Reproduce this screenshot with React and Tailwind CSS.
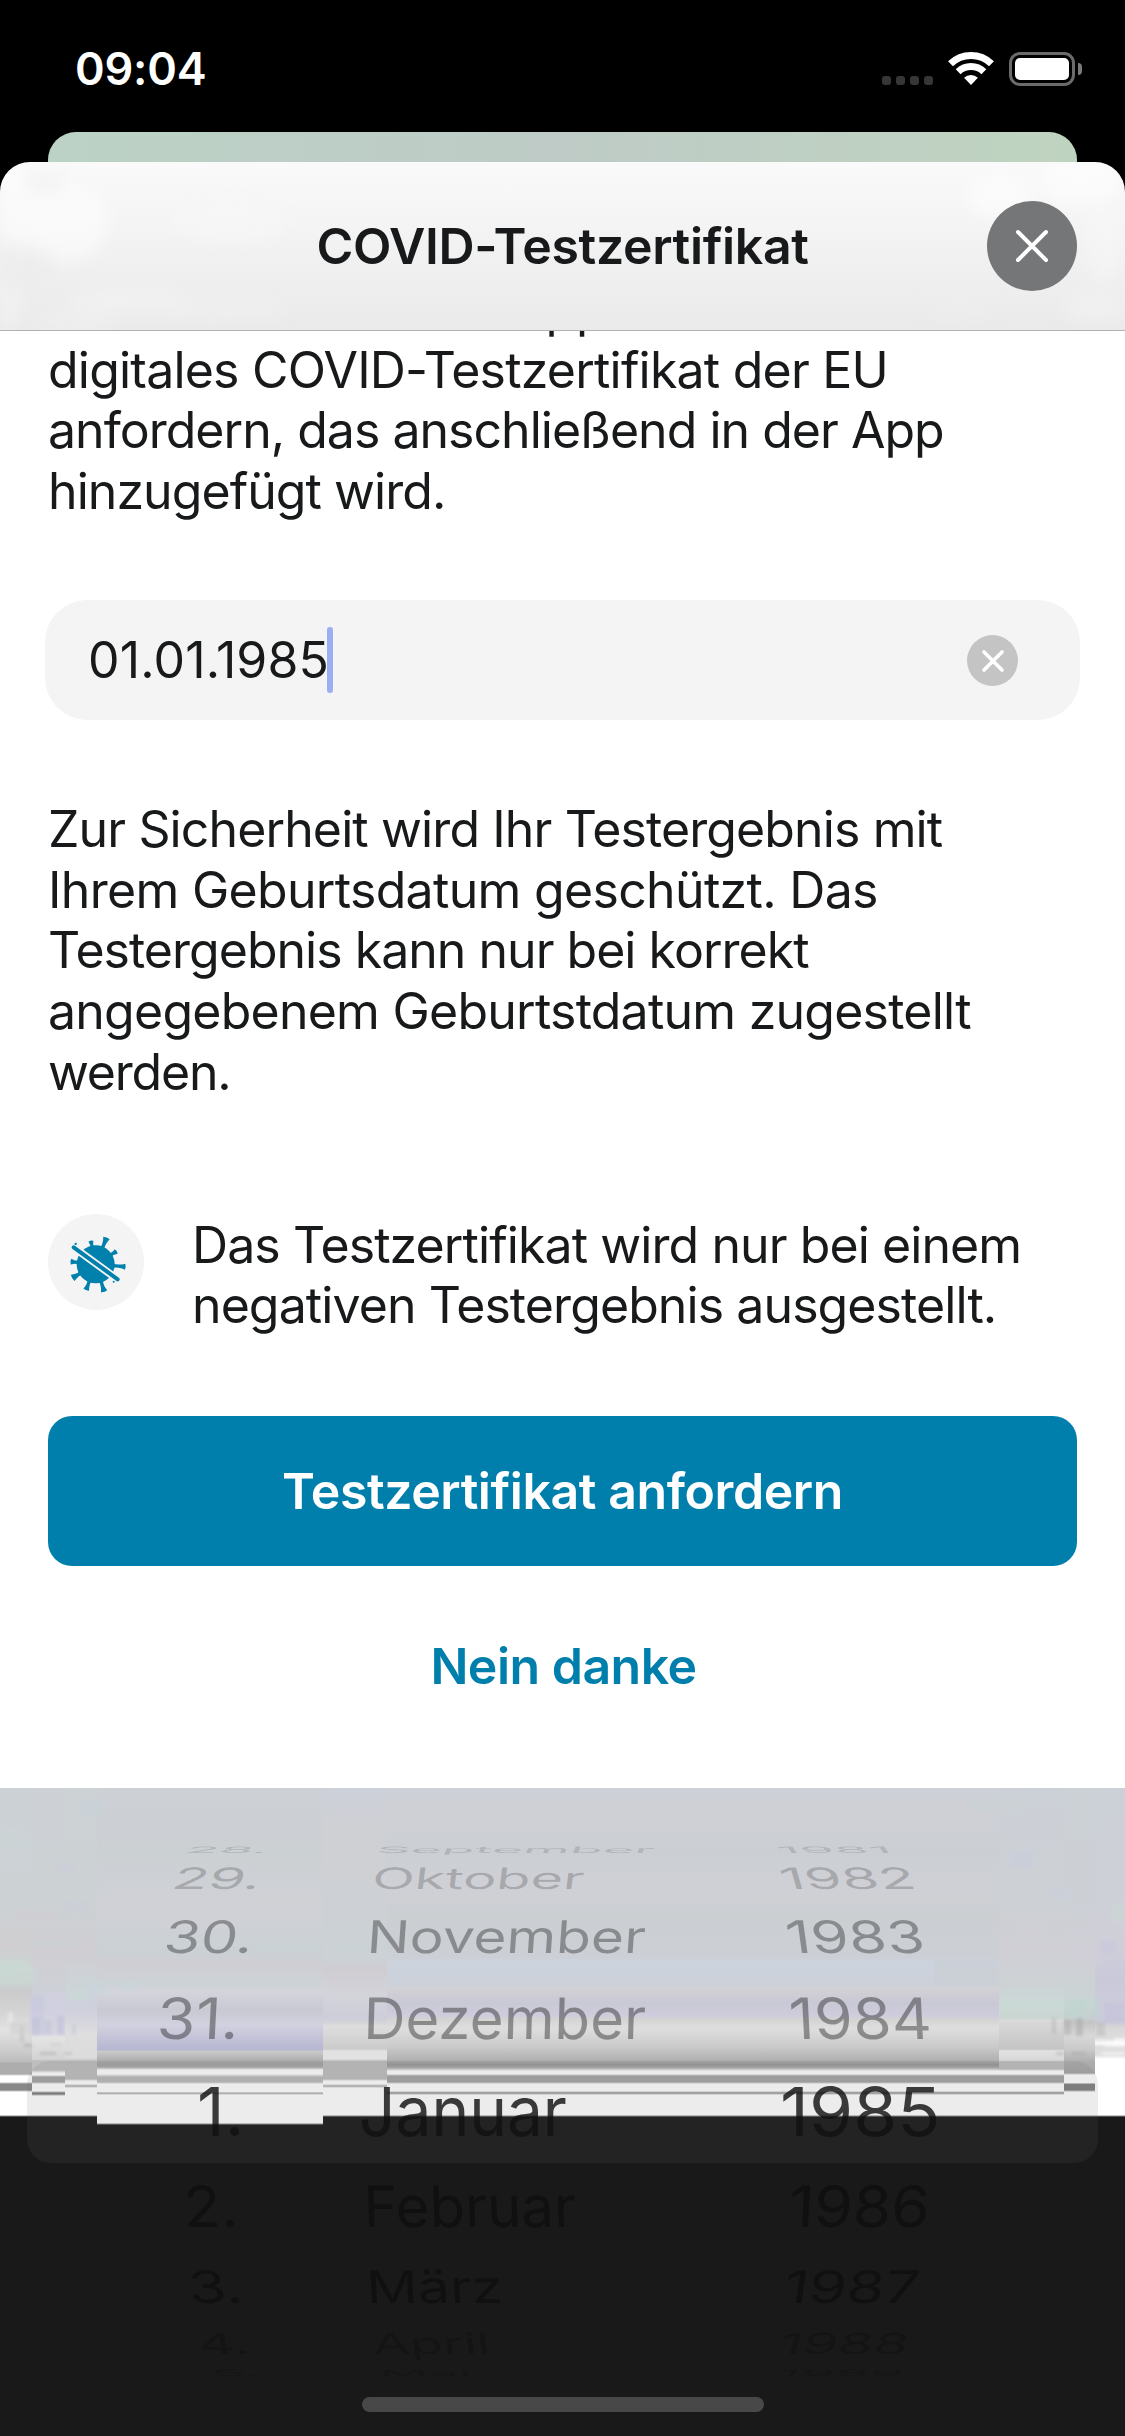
const INTRO = [
  ['digitales COVID-Testzertifikat der EU', 'tracking-[-0.79px]'],
  ['anfordern, das anschließend in der App', 'tracking-[-0.98px]'],
  ['hinzugefügt wird.', 'tracking-[-0.94px]'],
];

const SECURITY = [
  ['Zur Sicherheit wird Ihr Testergebnis mit', 'tracking-[-0.88px]'],
  ['Ihrem Geburtsdatum geschützt. Das', 'tracking-[-0.68px]'],
  ['Testergebnis kann nur bei korrekt', 'tracking-[-0.98px]'],
  ['angegebenem Geburtstdatum zugestellt', 'tracking-[-0.76px]'],
  ['werden.', 'tracking-[-1.2px]'],
];

const NOTICE = [
  ['Das Testzertifikat wird nur bei einem', 'tracking-[-0.91px]'],
  ['negativen Testergebnis ausgestellt.', 'tracking-[-0.91px]'],
];

// Each wheel row: height down to its baseline, vertical scale, tint and
// its day / month / year cells as [text, left, horizontal scale, skew].
const WHEEL = [
  { h: 65, sy: 0.13, tint: 'text-black/15', cells: [['28.', 183, 0.82, -40], ['September', 375, 0.79, -20], ['1981', 779, 0.82, 35]] },
  { h: 36, sy: 0.435, tint: 'text-black/20', cells: [['29.', 170, 0.87, -17], ['Oktober', 371, 0.82, -7], ['1982', 783, 0.88, 16]] },
  { h: 64, sy: 0.66, tint: 'text-black/33', cells: [['30.', 162, 0.87, -9], ['November', 366, 0.835, -4], ['1983', 788, 0.9, 8]] },
  { h: 85.5, sy: 0.84, tint: 'text-black/36', cells: [['31.', 156, 0.92, -3], ['Dezember', 363, 0.855, -1.5], ['1984', 790, 0.915, 3]] },
  { h: 97.5, sy: 1, tint: 'text-[#111]/82', cells: [['1.', 197, 1, 0], ['Januar', 359, 0.94, 0], ['1985', 780, 1.048, 0]] },
  { h: 90.5, sy: 0.84, tint: 'text-black/36', cells: [['2.', 184, 0.9, 2], ['Februar', 364, 0.855, 1.5], ['1986', 788, 0.915, -3]] },
  { h: 76, sy: 0.66, tint: 'text-black/33', cells: [['3.', 190, 0.9, 6], ['März', 367, 0.84, 3], ['1987', 782, 0.9, -8]] },
  { h: 51.5, sy: 0.43, tint: 'text-black/20', cells: [['4.', 199, 0.85, 10], ['April', 374, 0.79, 7], ['1988', 777, 0.84, -16]] },
  { h: 21.5, sy: 0.13, tint: 'text-black/15', cells: [['5.', 212, 0.85, 30], ['Mai', 380, 0.8, 20], ['1989', 776, 0.82, -30]] },
];

const W = '#ffffff';
const D = '#191919';

// Vertical strips of the keyboard backdrop: x, width, then [y, colour] steps.
const STRIPS = [
  [0, 32, [[1788, '#ccd1d6'], [1900, '#ccd2d4'], [1945, '#d0ced1'], [1970, '#cbd5d2'], [1992, '#cbcbcd'], [2015, '#d6d6d6'], [2030, '#e2e2e2'], [2050, '#cdcdcd'], [2062, '#bcbcbc'], [2063, '#adadad'], [2074, '#adadad'], [2076, W], [2082, W], [2084, '#888'], [2090, '#888'], [2092, W], [2115, W], [2117, D]]],
  [32, 33, [[1788, '#cdd1d6'], [1900, '#ccd1d3'], [1950, '#d0ced2'], [1985, '#cdd0d6'], [2010, '#cfcfe0'], [2034, '#d8d8e0'], [2037, '#e4e4e4'], [2059, '#d4d4d4'], [2061, '#bebebe'], [2070, '#bebebe'], [2073, W], [2075, W], [2077, '#a5a5a5'], [2082, '#a5a5a5'], [2084, W], [2091, W], [2093, '#7c7c7c'], [2094, '#7c7c7c'], [2096, W], [2115, W], [2117, D]]],
  [65, 32, [[1788, '#cdd2d5'], [1900, '#ccd1d3'], [1950, '#d0ced2'], [1985, '#ccd4d8'], [2010, '#cfd0dc'], [2034, '#dedede'], [2058, '#dcdcdc'], [2061, '#bebebe'], [2079, '#bebebe'], [2081, W], [2084, W], [2086, '#aaa'], [2088, W], [2115, W], [2117, D]]],
  [97, 226, [[1788, '#cdd0d5'], [1830, '#cccfd3'], [1850, '#cbd0d3'], [1915, '#d0d1d6'], [1950, '#cad1d4'], [1965, '#cfced3'], [1985, '#ccd3d6'], [1992, '#d4d4dc'], [2010, '#c9c9d4'], [2025, '#d2d1df'], [2050, '#b6b6d2'], [2051, '#cbcbcb'], [2064, '#a3a3a3'], [2067, '#a8a8a8'], [2070, W], [2074, W], [2077, '#bababa'], [2082, '#bababa'], [2084, W], [2092, W], [2093, '#a0a0a0'], [2095, W], [2123, W], [2125, D]]],
  [323, 64, [[1788, '#ccd0d9'], [1830, '#cfd0d4'], [1900, '#cdd0d4'], [1955, '#cbd2d6'], [1970, '#cfcdd2'], [1995, '#d3d3da'], [2018, '#cecedb'], [2022, '#d3d3d8'], [2026, '#dedede'], [2049, '#cbcbcb'], [2051, '#e2e2e2'], [2059, '#e2e2e2'], [2061, '#bebebe'], [2079, '#bebebe'], [2081, W], [2084, W], [2086, '#aaa'], [2088, W], [2115, W], [2117, D]]],
  [387, 612, [[1788, '#ccd0d8'], [1810, '#cfd0d5'], [1850, '#cbcfd4'], [1890, '#cfd0d5'], [1915, '#cbcfd2'], [1957, '#cccfd5'], [1961, '#ccd3dd'], [1985, '#ccd1d9'], [1988, '#d2d2d5'], [2003, '#c9c8d5'], [2016, '#cfcddd'], [2019, '#d3d3d3'], [2028, '#dedede'], [2047, '#cacaca'], [2060, '#b1b1b1'], [2065, '#979797'], [2068, '#b0b0b0'], [2071, W], [2074, W], [2076, '#a5a5a5'], [2082, '#a5a5a5'], [2084, W], [2091, W], [2093, '#8c8c8c'], [2095, W], [2115, W], [2117, D]]],
  [999, 65, [[1788, '#ccd0d7'], [1900, '#cdd0d4'], [1950, '#cfcfd5'], [1985, '#cdd2d5'], [2005, '#cadad6'], [2018, '#cbd5d2'], [2020, '#dadada'], [2049, '#c4c4c4'], [2051, '#e2e2e2'], [2060, '#d8d8d8'], [2062, '#bebebe'], [2069, '#bebebe'], [2071, W], [2074, W], [2076, '#a5a5a5'], [2082, '#a5a5a5'], [2084, W], [2091, W], [2093, '#8c8c8c'], [2095, W], [2115, W], [2117, D]]],
  [1064, 31, [[1788, '#ccd1d6'], [1900, '#ccd0d5'], [1950, '#d0cfd7'], [1990, '#ccd3d4'], [2005, '#c6d5d2'], [2018, '#c8cfd0'], [2022, '#c4c4c4'], [2036, '#d8d8d8'], [2050, '#c9c9c9'], [2062, '#adadad'], [2073, '#a5a5a5'], [2075, W], [2083, W], [2084, '#808080'], [2090, '#808080'], [2092, W], [2115, W], [2117, D]]],
  [1095, 30, [[1788, '#ccd0d7'], [1900, '#cdd0d6'], [1940, '#d0cfd8'], [1980, '#cac9da'], [2005, '#cdccdc'], [2022, '#cac9da'], [2028, '#d8d8d8'], [2038, '#dcdcdc'], [2043, '#fafafa'], [2047, '#dddddd'], [2055, '#dedede'], [2059, W], [2115, W], [2117, D]]],
];

// Faint colour speckles along both edges: x, y, width, height, colour.
const SPECKS = [
  [0, 1960, 26, 26, '#c8dcd4'], [14, 1968, 22, 16, '#cbdad5'], [30, 1995, 14, 40, '#c9c8e0'], [46, 1992, 18, 20, '#d2d1e2'],
  [32, 2018, 8, 17, '#bcbcd8'], [44, 2020, 8, 15, '#c2c2dc'], [57, 2016, 7, 19, '#bebeda'], [72, 2024, 4, 11, '#c6c6de'],
  [66, 1990, 22, 10, '#cbdad5'], [92, 1986, 14, 8, '#c8d6de'], [122, 1984, 14, 9, '#c9d6dd'], [8, 2012, 5, 12, '#f0f0f0'],
  [10, 2022, 20, 12, '#cfcfcf'], [20, 2026, 4, 16, '#bdbdbd'], [24, 2044, 8, 3, '#a5a5a5'], [40, 2052, 16, 3, '#ababab'],
  [65, 2052, 7, 3, '#b2b2b2'], [50, 2043, 12, 4, '#d0d0d0'], [56, 1862, 20, 12, '#cccfd9'], [66, 1902, 20, 10, '#cbcedb'],
  [14, 1912, 40, 10, '#d2cfd4'], [30, 1940, 46, 6, '#ccd3d6'], [0, 1830, 24, 20, '#cdd6d6'], [80, 1800, 24, 14, '#c9d2da'],
  [1068, 2000, 18, 18, '#bfd6d0'], [1094, 1998, 6, 20, '#bdd4cf'], [1104, 2002, 20, 20, '#c3c2da'], [1052, 2018, 4, 16, '#b8b8b8'],
  [1064, 2020, 7, 15, '#b0b0b0'], [1076, 2018, 7, 18, '#ababab'], [1096, 2022, 9, 14, '#bcbcbc'], [1056, 2052, 8, 3, '#adadad'],
  [1072, 2052, 14, 3, '#a8a8a8'], [1104, 2043, 21, 4, '#ffffff'], [1102, 2052, 23, 3, '#ffffff'], [1114, 2038, 11, 5, '#ffffff'],
  [1100, 1940, 16, 14, '#c9c8df'], [1080, 1952, 18, 14, '#d2cfda'], [1112, 1904, 13, 18, '#cbd8d6'], [1010, 1850, 24, 18, '#c9cedc'],
  [1050, 1888, 24, 12, '#cbd0dd'], [970, 1800, 60, 12, '#cbd2d5'], [1020, 1925, 22, 10, '#d1cfd5'], [935, 1960, 64, 26, '#cbcfd4'],
];

// Soft mottling in the translucent sheet header: x, y, rx, ry, colour.
const MOTTLE = [
  [60, 60, 50, 40, '#ffffff'], [130, 140, 60, 12, '#f6f6f6'], [200, 148, 90, 8, '#f3f3f3'], [25, 105, 30, 20, '#ebebeb'],
  [230, 60, 60, 22, '#f8f8f8'], [10, 40, 16, 40, '#ffffff'], [8, 145, 12, 22, '#f6f6f6'], [75, 160, 40, 8, '#f4f4f4'],
  [1000, 35, 34, 22, '#ffffff'], [1080, 20, 40, 24, '#ffffff'], [1105, 80, 20, 40, '#f8f8f8'], [960, 140, 34, 16, '#eeeeee'],
  [1095, 145, 30, 16, '#f4f4f4'], [45, 20, 22, 14, '#f2f2f2'],
];

function Lines({ items }) {
  return items.map(([text, tracking]) => (
    <span key={text} className={`block whitespace-nowrap ${tracking}`}>{text}</span>
  ));
}

function StatusBar() {
  return (
    <header className="flex h-[132px] items-start justify-between pl-[75px] pr-[43px]">
      <span className="mt-[42px] text-[45px] font-semibold leading-[54px] tracking-[-0.2px] text-white">09:04</span>
      <div className="flex pt-[52px]">
        <div className="mr-[15px] mt-[24px] flex gap-[5px]">
          {[0, 1, 2, 3].map((i) => <i key={i} className="size-[9px] rounded-[3px] bg-[#363636]" />)}
        </div>
        <svg className="mr-[15px] h-[33px] w-[46px]" viewBox="0 0 46 33" fill="none">
          <path d="M2.5 11.8A29.5 29.5 0 0 1 43.5 11.8M10.15 19.7A18.5 18.5 0 0 1 35.85 19.7" stroke="#fff" strokeWidth="7" />
          <path d="M23 33L16.1 25.8A10 10 0 0 1 29.9 25.8Z" fill="#fff" />
        </svg>
        <div className="h-[34px] w-[66px] rounded-[11px] border-[3px] border-[#6b6b6b] p-[3px]">
          <div className="size-full rounded-[5px] bg-white" />
        </div>
        <div className="ml-[3px] mt-[11px] h-[12px] w-[4px] rounded-r-full bg-[#7a7a7a]" />
      </div>
    </header>
  );
}

function Spike({ x, y, w }) {
  const dx = x - 107;
  const dy = y - 115;
  const len = Math.hypot(dx, dy);
  const angle = (Math.atan2(dy, dx) * 180) / Math.PI;
  const h = w / 2;
  return (
    <path
      transform={`translate(107 115) rotate(${angle})`}
      d={`M50 -7Q60 -3 ${len - 7} ${-h * 0.7}L${len + 1} ${-h}Q${len + 5} 0 ${len + 1} ${h}L${len - 7} ${h * 0.7}Q60 3 50 7Z`}
    />
  );
}

function VirusOff() {
  return (
    <svg className="size-[72px]" viewBox="0 0 216 216" fill="#0080ad">
      <circle cx="107" cy="115" r="57" />
      <Spike x={93} y={47} w={15} />
      <Spike x={139} y={37} w={21} />
      <Spike x={168} y={77} w={16} />
      <Spike x={194} y={122} w={18} />
      <Spike x={34} y={107} w={17} />
      <Spike x={39} y={155} w={22} />
      <Spike x={79} y={190} w={18} />
      <Spike x={132} y={195} w={20} />
      <path d="M30 56L185 169" stroke="#f4f4f4" strokeWidth="23" />
      <path d="M41 64L173 160" stroke="#0080ad" strokeWidth="12" strokeLinecap="round" />
      <circle cx="47" cy="54" r="3.5" />
      <circle cx="161" cy="167" r="3" />
    </svg>
  );
}

function Backdrop() {
  return (
    <svg className="absolute inset-0 size-full" viewBox="0 1788 1125 648" preserveAspectRatio="none" shapeRendering="crispEdges">
      <defs>
        <filter id="soft"><feGaussianBlur stdDeviation="1.8" /></filter>
        {STRIPS.map(([x, , stops]) => (
          <linearGradient key={x} id={`strip${x}`} gradientUnits="userSpaceOnUse" x1="0" x2="0" y1="1788" y2="2128">
            {stops.map(([y, c]) => <stop key={y} offset={(y - 1788) / 340} stopColor={c} />)}
          </linearGradient>
        ))}
      </defs>
      <rect x="0" y="2120" width="1125" height="316" fill={D} />
      {STRIPS.map(([x, w]) => <rect key={x} x={x} y="1788" width={w} height="340" fill={`url(#strip${x})`} />)}
      <g filter="url(#soft)" opacity="0.55">
        {SPECKS.map(([x, y, w, h, c]) => <rect key={`${x}-${y}`} x={x} y={y} width={w} height={h} fill={c} />)}
      </g>
    </svg>
  );
}

function DatePicker() {
  return (
    <section className="relative h-[648px] overflow-hidden">
      <Backdrop />
      <div className="absolute left-[27px] top-[273px] h-[102px] w-[1071px] rounded-[24px] bg-[#6d6d6d]/13" />
      <div className="relative">
        {WHEEL.map(({ h, sy, tint, cells }) => (
          <div key={cells[1][0]} className={`grid grid-rows-[100%] items-end ${tint}`} style={{ height: h }}>
            {cells.map(([text, x, sx, skew]) => (
              <span
                key={text}
                className="col-start-1 row-start-1 h-[59px] w-max origin-[0_58.7px] text-[68px] leading-[68px]"
                style={{ transform: `translateX(${x}px) skewX(${skew}deg) scale(${sx}, ${sy})` }}
              >
                {text}
              </span>
            ))}
          </div>
        ))}
      </div>
      <div className="absolute bottom-[24px] left-[362px] h-[15px] w-[402px] rounded-full bg-[#484848]" />
    </section>
  );
}

export default function App() {
  return (
    <div className="flex h-[2436px] w-[1125px] flex-col overflow-hidden bg-black font-['Inter',sans-serif] text-[#17191a]">
      <StatusBar />
      <div className="mx-[48px] h-[30px] shrink-0 rounded-t-[28px] bg-linear-to-r from-[#bcd2c6] via-[#becbc6] to-[#bfd4c0]" />
      <main className="flex min-h-0 flex-1 flex-col">
        <div className="relative z-10 -mb-px flex h-[169px] shrink-0 items-center justify-center overflow-hidden rounded-t-[30px] border-b border-[#b2b2b2] bg-linear-to-b from-[#fafafa] to-[#eaeaea]">
          <svg className="absolute inset-0 size-full opacity-50 blur-[8px]" viewBox="0 0 1125 168">
            {MOTTLE.map(([x, y, rx, ry, c]) => <ellipse key={`${x}-${y}`} cx={x} cy={y} rx={rx} ry={ry} fill={c} />)}
          </svg>
          <h1 className="relative mb-px text-[50px] font-semibold leading-[60px] tracking-[-0.34px]">COVID-Testzertifikat</h1>
          <button className="absolute right-[48px] top-[39px] grid size-[90px] place-items-center rounded-full bg-[#757678]">
            <svg className="size-[34px]" viewBox="0 0 34 34" stroke="#fff" strokeWidth="4" strokeLinecap="round">
              <path d="M3 3L31 31M31 3L3 31" />
            </svg>
          </button>
        </div>
        <div className="h-[1458px] shrink-0 overflow-hidden bg-white px-[48px] text-[50px]">
          <p className="-mt-[51px] h-[242.4px] leading-[60.6px]">
            <span className="block pl-[463px]">App ein</span>
            <Lines items={INTRO} />
          </p>
          <div className="-mx-[3px] mt-[78.6px] flex h-[120px] items-center rounded-[42px] bg-[#f4f4f4] pl-[43px] pr-[62px]">
            <span className="mt-[2px] tracking-[0.15px]">01.01.1985</span>
            <i className="-ml-[2px] h-[66px] w-[5.5px] rounded-full bg-[#9baef2]" />
            <button className="ml-auto mt-[2px] grid size-[51px] place-items-center rounded-full bg-[#c4c4c4]">
              <svg className="size-[24px]" viewBox="0 0 24 24" stroke="#fff" strokeWidth="3.6" strokeLinecap="round">
                <path d="M3 3L21 21M21 3L3 21" />
              </svg>
            </button>
          </div>
          <p className="mt-[79px] leading-[60.75px]"><Lines items={SECURITY} /></p>
          <div className="mt-[111.25px] flex h-[121px] gap-[48px]">
            <div className="grid size-[96px] shrink-0 place-items-center rounded-full bg-[#f4f4f4]"><VirusOff /></div>
            <p className="mt-px leading-[60px]"><Lines items={NOTICE} /></p>
          </div>
          <button className="mt-[81px] h-[150px] w-full rounded-[24px] bg-[#007fad] pt-px font-semibold tracking-[-0.42px] text-white">
            Testzertifikat anfordern
          </button>
          <button className="mt-[25px] h-[150px] w-full pl-[2px] pt-px font-semibold tracking-[-0.5px] text-[#007fad]">Nein danke</button>
        </div>
        <DatePicker />
      </main>
    </div>
  );
}
